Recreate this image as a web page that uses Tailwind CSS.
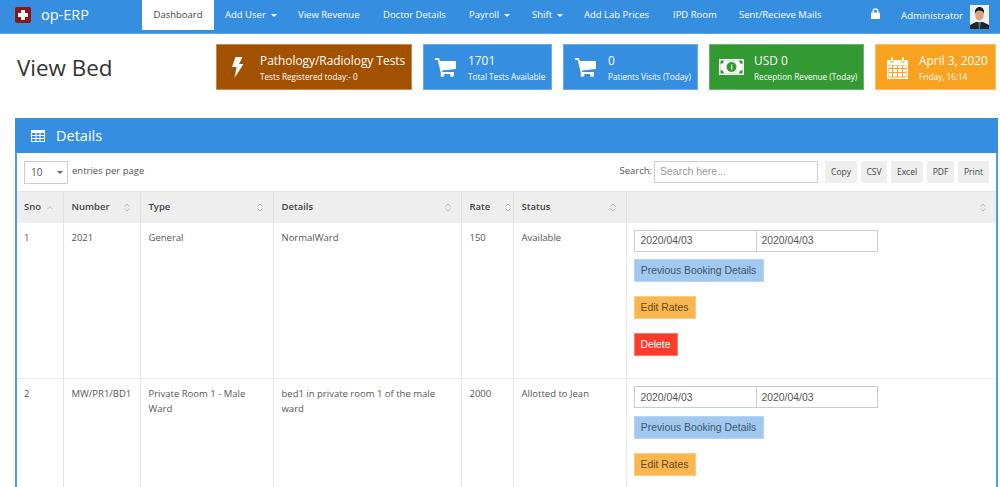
<!DOCTYPE html>
<html lang="en">
<head>
    <meta charset="UTF-8">
    <title>op-ERP - View Bed</title>
    <script src="https://cdn.jsdelivr.net/npm/@tailwindcss/browser@4"></script>
</head>
<body class="h-[487px] overflow-hidden bg-white font-['Open_Sans',sans-serif] text-[#555]">

    <!-- Navbar -->
    <nav class="flex h-[34px] items-start border-b border-[#5aa5e8] bg-[#358edf] text-white">
        <div class="flex h-[30px] w-[142px] shrink-0 items-center pl-[15px]">
            <svg class="h-[16px] w-[16px] shrink-0" viewBox="0 0 16 16"><rect width="16" height="16" rx="2" fill="#8e1418"/><path d="M6 3h4v3h3v4h-3v3H6v-3H3V6h3z" fill="#fff"/></svg>
            <span class="ml-[10px] text-[14.5px] leading-none">op-ERP</span>
        </div>
        <div class="flex h-[30px] w-[72px] items-center justify-center bg-white text-[9.5px] text-[#444]">Dashboard</div>
        <div class="flex h-[30px] items-center gap-[21px] pl-[11px] text-[9.5px] text-white">
            <span class="flex w-[52px] items-center">Add User<i class="ml-[5px] h-0 w-0 border-x-[3px] border-t-[3px] border-x-transparent border-t-white"></i></span>
            <span class="w-[64px]">View Revenue</span>
            <span class="w-[65px]">Doctor Details</span>
            <span class="flex w-[42px] items-center">Payroll<i class="ml-[5px] h-0 w-0 border-x-[3px] border-t-[3px] border-x-transparent border-t-white"></i></span>
            <span class="flex w-[31px] items-center">Shift<i class="ml-[5px] h-0 w-0 border-x-[3px] border-t-[3px] border-x-transparent border-t-white"></i></span>
            <span class="w-[68px]">Add Lab Prices</span>
            <span class="w-[45px]">IPD Room</span>
            <span>Sent/Recieve Mails</span>
        </div>
        <div class="ml-auto flex h-[33px] items-center pr-[11px]">
            <svg class="-mt-[6px] h-[11px] w-[9px]" viewBox="0 0 9 11"><path d="M2.2 5V3.2a2.3 2.3 0 0 1 4.6 0V5" fill="none" stroke="#fff" stroke-width="1.4"/><rect y="4.6" width="9" height="6.4" rx=".8" fill="#fff"/></svg>
            <span class="ml-[21px] text-[9.6px]">Administrator</span>
            <svg class="ml-[7px] h-[24px] w-[19px]" viewBox="0 0 19 24"><rect width="19" height="24" fill="#eef0f2"/><path d="M0 24v-4l6-3h7l6 3v4z" fill="#20252b"/><path d="M8 17h3l-1 7h-1z" fill="#5e6b78"/><ellipse cx="9.5" cy="10" rx="4.2" ry="5.6" fill="#d9a57f"/><path d="M5 9c-.6-5 2-7 4.600-7s5 2 4.400 7c-.6-2-1.600-3.400-4.500-3.400S5.600 7 5 9z" fill="#15171a"/></svg>
        </div>
    </nav>

    <!-- Title and stat cards -->
    <div class="flex h-[84px] items-start pt-[10px] pl-[17px]">
        <h1 class="w-[199px] pt-[8px] text-[22.4px] leading-[32px] text-[#333]">View Bed</h1>
        <div class="flex gap-[11px] text-white">
            <div class="flex h-[46px] w-[196px] items-center border border-[#c98a4e] bg-[#a25100]">
                <svg class="ml-[14px] h-[21px] w-[13px] shrink-0" viewBox="0 0 13 21"><path d="M4.500 0h7L8 7h4.500L3.500 21 5.500 10H1z" fill="#fff"/></svg>
                <div class="ml-[16px]">
                    <div class="text-[11.9px] leading-[16px]">Pathology/Radiology Tests</div>
                    <div class="mt-[3px] text-[8.2px] leading-[11px]">Tests Registered today:- 0</div>
                </div>
            </div>
            <div class="flex h-[46px] w-[129px] items-center border border-[#6aaae8] bg-[#358edf]">
                <svg class="ml-[11px] h-[20px] w-[21px] shrink-0" viewBox="0 0 21 20"><path d="M0 1h4l.8 3H21v8l-14 1.500.4 1.500H19v2H6L2.800 3H0z" fill="#fff"/><circle cx="7.500" cy="18" r="2" fill="#fff"/><circle cx="17" cy="18" r="2" fill="#fff"/></svg>
                <div class="ml-[12px]">
                    <div class="text-[11.9px] leading-[16px]">1701</div>
                    <div class="mt-[3px] text-[8.2px] leading-[11px]">Total Tests Available</div>
                </div>
            </div>
            <div class="flex h-[46px] w-[135px] items-center border border-[#6aaae8] bg-[#358edf]">
                <svg class="ml-[11px] h-[20px] w-[21px] shrink-0" viewBox="0 0 21 20"><path d="M0 1h4l.8 3H21v8l-14 1.500.4 1.500H19v2H6L2.800 3H0z" fill="#fff"/><circle cx="7.500" cy="18" r="2" fill="#fff"/><circle cx="17" cy="18" r="2" fill="#fff"/></svg>
                <div class="ml-[12px]">
                    <div class="text-[11.9px] leading-[16px]">0</div>
                    <div class="mt-[3px] text-[8.2px] leading-[11px]">Patients Visits (Today)</div>
                </div>
            </div>
            <div class="flex h-[46px] w-[155px] items-center border border-[#6fb070] bg-[#339933]">
                <svg class="ml-[9px] h-[16px] w-[25px] shrink-0" viewBox="0 0 25 16"><rect width="25" height="16" fill="#fff"/><rect x="1.500" y="1.500" width="22" height="13" fill="#339933"/><path d="M1.500 5a4 4 0 0 0 3.500-3.500h15A4 4 0 0 0 23.500 5v6a4 4 0 0 0-3.500 3.500H5A4 4 0 0 0 1.500 11z" fill="#fff"/><circle cx="12.500" cy="8" r="5" fill="#339933"/><path d="M12 5.500h1.300v5H12z" fill="#fff"/></svg>
                <div class="ml-[10px]">
                    <div class="text-[11.9px] leading-[16px]">USD 0</div>
                    <div class="mt-[3px] text-[8.2px] leading-[11px]">Reception Revenue (Today)</div>
                </div>
            </div>
            <div class="flex h-[46px] w-[121px] items-center border border-[#fbc069] bg-[#f9a21f]">
                <svg class="ml-[11px] h-[23px] w-[21px] shrink-0" viewBox="0 0 21 23"><path d="M0 4h3.500v2.500h3V4h8v2.500h3V4H21v19H0z" fill="#fff"/><rect x="4" y="1" width="2" height="4.500" rx="1" fill="#fff"/><rect x="15" y="1" width="2" height="4.500" rx="1" fill="#fff"/><path d="M1.500 9h18v12.500h-18z" fill="#f9a21f"/><path d="M2 9.500h3v2.500H2zM6 9.500h4v2.500H6zM11 9.500h4v2.500h-4zM16 9.500h3v2.500h-3zM2 13h3v3H2zM6 13h4v3H6zM11 13h4v3h-4zM16 13h3v3h-3zM2 17h3v3.500H2zM6 17h4v3.500H6zM11 17h4v3.500h-4zM16 17h3v3.500h-3z" fill="#fff"/></svg>
                <div class="ml-[11px]">
                    <div class="text-[11.9px] leading-[16px] whitespace-nowrap">April 3, 2020</div>
                    <div class="mt-[3px] text-[8.2px] leading-[11px]">Friday, 16:14</div>
                </div>
            </div>
        </div>
    </div>

    <!-- Details panel -->
    <section class="ml-[15px] w-[983px] border-x-2 border-[#4f9de4]">
        <div class="-mx-[2px] flex h-[35px] items-center bg-[#358edf] pl-[16px] text-white">
            <svg class="h-[12px] w-[14px]" viewBox="0 0 14 12"><path d="M0 0h14v12H0z" fill="#fff"/><path d="M1 3h3.500v2H1zM5.500 3h3v2h-3zM9.500 3H13v2H9.500zM1 6h3.500v2H1zM5.500 6h3v2h-3zM9.500 6H13v2H9.500zM1 9h3.500v2H1zM5.500 9h3v2h-3zM9.500 9H13v2H9.500z" fill="#358edf"/></svg>
            <span class="ml-[11px] text-[14.5px]">Details</span>
        </div>

        <!-- Table toolbar -->
        <div class="flex h-[38px] items-start pt-[8px] pl-[7px] text-[9.5px] text-[#555]">
            <div class="flex h-[23px] w-[44px] items-center justify-between border border-[#ccc] pr-[4px] pl-[6px] text-[10px]">10<i class="h-0 w-0 border-x-[3px] border-t-[3px] border-x-transparent border-t-[#666]"></i></div>
            <span class="ml-[4px] pt-[3px] leading-[14px]">entries per page</span>
            <div class="ml-auto flex items-start pr-[7px]">
                <span class="pt-[3px] pr-[2px] leading-[14px]">Search:</span>
                <div class="flex h-[22px] w-[164px] items-center border border-[#ccc] pl-[5px] font-['Liberation_Sans',sans-serif] text-[10.5px] text-[#999]">Search here...</div>
                <div class="ml-[7px] flex gap-[4px] text-[8.5px] text-[#444]">
                    <span class="flex h-[22px] w-[32px] items-center justify-center bg-[#eee]">Copy</span>
                    <span class="flex h-[22px] w-[26px] items-center justify-center bg-[#eee]">CSV</span>
                    <span class="flex h-[22px] w-[32px] items-center justify-center bg-[#eee]">Excel</span>
                    <span class="flex h-[22px] w-[27px] items-center justify-center bg-[#eee]">PDF</span>
                    <span class="flex h-[22px] w-[31px] items-center justify-center bg-[#eee]">Print</span>
                </div>
            </div>
        </div>

        <!-- Table -->
        <table class="w-[979px] table-fixed border-collapse text-left text-[9.5px] text-[#555]">
            <colgroup>
                <col class="w-[46px]"><col class="w-[77px]"><col class="w-[133px]"><col class="w-[188px]"><col class="w-[52px]"><col class="w-[113px]"><col>
            </colgroup>
            <thead class="bg-[#eee] font-semibold text-[#444]">
                <tr class="h-[31px] border-t border-[#e4e4e4]">
                    <th class="border-r border-[#e0e0e0] pl-[7px] font-semibold"><span class="flex items-center justify-between pr-[10px]">Sno<svg class="h-[3px] w-[6px]" viewBox="0 0 6 3"><path d="M.5 3L3 .5 5.500 3" fill="none" stroke="#aaa" stroke-width=".8"/></svg></span></th>
                    <th class="border-r border-[#e0e0e0] pl-[8px] font-semibold"><span class="flex items-center justify-between pr-[10px]">Number<svg class="h-[9px] w-[6px]" viewBox="0 0 6 9"><path d="M.5 3.500L3 1l2.500 2.500M.5 5.500L3 8l2.500-2.500" fill="none" stroke="#aaa" stroke-width=".8"/></svg></span></th>
                    <th class="border-r border-[#e0e0e0] pl-[8px] font-semibold"><span class="flex items-center justify-between pr-[10px]">Type<svg class="h-[9px] w-[6px]" viewBox="0 0 6 9"><path d="M.5 3.500L3 1l2.500 2.500M.5 5.500L3 8l2.500-2.500" fill="none" stroke="#aaa" stroke-width=".8"/></svg></span></th>
                    <th class="border-r border-[#e0e0e0] pl-[8px] font-semibold"><span class="flex items-center justify-between pr-[10px]">Details<svg class="h-[9px] w-[6px]" viewBox="0 0 6 9"><path d="M.5 3.500L3 1l2.500 2.500M.5 5.500L3 8l2.500-2.500" fill="none" stroke="#aaa" stroke-width=".8"/></svg></span></th>
                    <th class="border-r border-[#e0e0e0] pl-[8px] font-semibold"><span class="flex items-center justify-between pr-[2px]">Rate<svg class="h-[9px] w-[6px]" viewBox="0 0 6 9"><path d="M.5 3.500L3 1l2.500 2.500M.5 5.500L3 8l2.500-2.500" fill="none" stroke="#aaa" stroke-width=".8"/></svg></span></th>
                    <th class="border-r border-[#e0e0e0] pl-[8px] font-semibold"><span class="flex items-center justify-between pr-[10px]">Status<svg class="h-[9px] w-[6px]" viewBox="0 0 6 9"><path d="M.5 3.500L3 1l2.500 2.500M.5 5.500L3 8l2.500-2.500" fill="none" stroke="#aaa" stroke-width=".8"/></svg></span></th>
                    <th class="pr-[10px]"><span class="flex justify-end"><svg class="h-[9px] w-[6px]" viewBox="0 0 6 9"><path d="M.5 3.500L3 1l2.500 2.500M.5 5.500L3 8l2.500-2.500" fill="none" stroke="#aaa" stroke-width=".8"/></svg></span></th>
                </tr>
            </thead>
            <tbody class="leading-[15px]">
                <tr class="h-[156px] border-b border-[#eee] align-top">
                    <td class="border-r border-[#e6e6e6] pt-[7px] pl-[7px]">1</td>
                    <td class="border-r border-[#e6e6e6] pt-[7px] pl-[8px]">2021</td>
                    <td class="border-r border-[#e6e6e6] pt-[7px] pl-[8px]">General</td>
                    <td class="border-r border-[#e6e6e6] pt-[7px] pl-[8px]">NormalWard</td>
                    <td class="border-r border-[#e6e6e6] pt-[7px] pl-[8px]">150</td>
                    <td class="border-r border-[#e6e6e6] pt-[7px] pl-[8px]">Available</td>
                    <td class="pt-[7px] pl-[7px] font-['Liberation_Sans',sans-serif] text-[10.4px]">
                        <div class="flex">
                            <span class="flex h-[22px] w-[123px] items-center border border-[#ccc] pl-[6px] text-[#555]">2020/04/03</span>
                            <span class="-ml-px flex h-[22px] w-[122px] items-center border border-[#ccc] pl-[5px] text-[#555]">2020/04/03</span>
                        </div>
                        <div class="mt-[7.5px] flex h-[23px] w-[130px] items-center justify-center border border-[#b5d5f3] bg-[#a1c9f0] text-[#3d5470]">Previous Booking Details</div>
                        <div class="mt-[14px] flex h-[23px] w-[62px] items-center justify-center border border-[#fbcb85] bg-[#fbb64f] text-[#5e4a26]">Edit Rates</div>
                        <div class="mt-[14px] flex h-[23px] w-[44px] items-center justify-center border border-[#fb7a70] bg-[#fb3b2c] text-white">Delete</div>
                    </td>
                </tr>
                <tr class="h-[156px] align-top">
                    <td class="border-r border-[#e6e6e6] pt-[7px] pl-[7px]">2</td>
                    <td class="border-r border-[#e6e6e6] pt-[7px] pl-[8px] whitespace-nowrap">MW/PR1/BD1</td>
                    <td class="border-r border-[#e6e6e6] pt-[7px] pr-[8px] pl-[8px]">Private Room 1 - Male Ward</td>
                    <td class="border-r border-[#e6e6e6] pt-[7px] pr-[4px] pl-[8px]">bed1 in private room 1 of the male ward</td>
                    <td class="border-r border-[#e6e6e6] pt-[7px] pl-[8px]">2000</td>
                    <td class="border-r border-[#e6e6e6] pt-[7px] pl-[8px]">Allotted to Jean</td>
                    <td class="pt-[7px] pl-[7px] font-['Liberation_Sans',sans-serif] text-[10.4px]">
                        <div class="flex">
                            <span class="flex h-[22px] w-[123px] items-center border border-[#ccc] pl-[6px] text-[#555]">2020/04/03</span>
                            <span class="-ml-px flex h-[22px] w-[122px] items-center border border-[#ccc] pl-[5px] text-[#555]">2020/04/03</span>
                        </div>
                        <div class="mt-[7.5px] flex h-[23px] w-[130px] items-center justify-center border border-[#b5d5f3] bg-[#a1c9f0] text-[#3d5470]">Previous Booking Details</div>
                        <div class="mt-[14px] flex h-[23px] w-[62px] items-center justify-center border border-[#fbcb85] bg-[#fbb64f] text-[#5e4a26]">Edit Rates</div>
                    </td>
                </tr>
            </tbody>
        </table>
    </section>
</body>
</html>
